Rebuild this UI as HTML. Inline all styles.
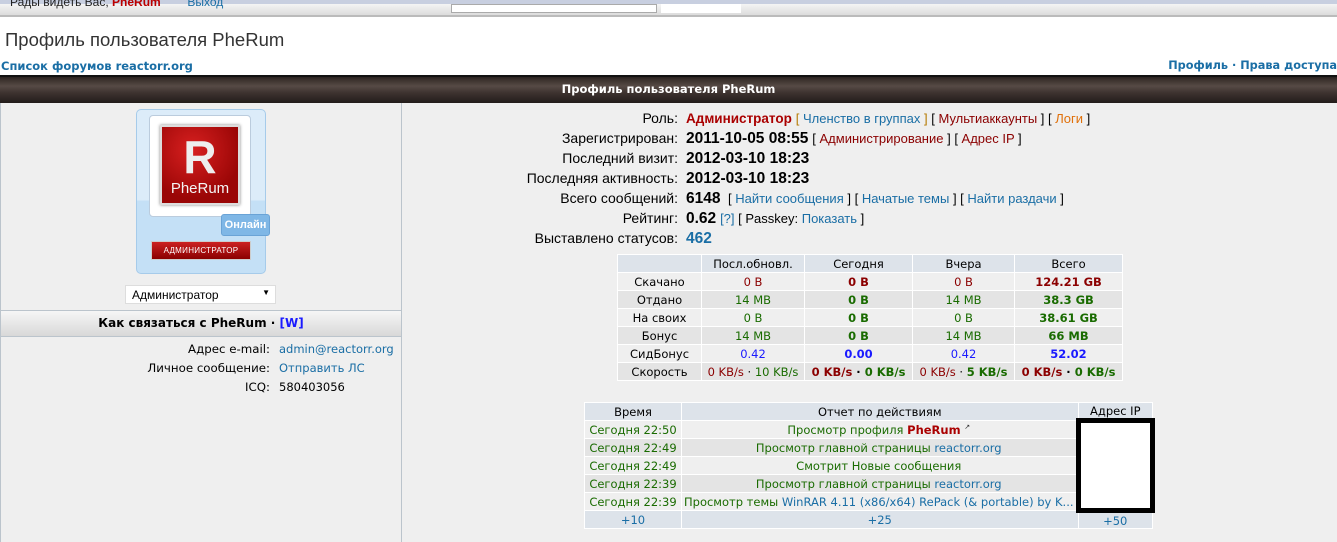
<!DOCTYPE html>
<html><head><meta charset="utf-8"><style>
*{margin:0;padding:0;box-sizing:border-box}
body{width:1337px;height:542px;overflow:hidden;background:#fff;font-family:"Liberation Sans","DejaVu Sans",sans-serif;font-size:13px;color:#000;position:relative}
.a{position:absolute}
.dv{font-family:"DejaVu Sans","Liberation Sans",sans-serif}
a{text-decoration:none}
.blue{color:#1a6ea5}
.br{color:#8b0000}
table{border-collapse:collapse}
td{text-align:center}
.st td{border:1px solid #fff;height:18px;font-size:11.5px;padding:0 2px;white-space:nowrap}
.st tr:nth-child(odd) td{background:#e4e4e4}
.st tr:nth-child(even) td{background:#efefef}
.st tr:first-child td{background:#dde3ea}
.g{color:#196b00}.r{color:#8b0000}.bl{color:#1a1aff}
.b{font-weight:bold}
.info div{height:20px;line-height:20px;white-space:nowrap;font-size:14px}
.info .s{font-size:13px}
.info b{font-size:15.5px}
.info b.n{font-size:13.5px}
</style></head><body>
<!-- top bar -->
<div class="a" style="left:0;top:0;width:1337px;height:17px;background:linear-gradient(#f4f4f4,#dcdcdc);border-bottom:2px solid #bbb;border-top:4px solid #c8cfe0"></div>
<div class="a" style="left:10px;top:-5px;font-size:12px;color:#222">Рады видеть Вас, <b style="color:#b00">PheRum</b> &nbsp;&nbsp;&nbsp;&nbsp;&nbsp;&nbsp;&nbsp;<span class="blue">Выход</span></div>
<div class="a" style="left:451px;top:4px;width:206px;height:9px;background:#fff;border:1px solid #aaa"></div>
<div class="a" style="left:661px;top:4px;width:80px;height:9px;background:#fff"></div>
<!-- title -->
<div class="a" style="left:5px;top:29px;font-size:18.5px;color:#333">Профиль пользователя PheRum</div>
<div class="a dv blue" style="left:1px;top:59px;font-size:11.5px;font-weight:bold">Список форумов reactorr.org</div>
<div class="a dv blue" style="right:0;top:59px;font-size:11.3px;font-weight:bold">Профиль · Права доступа</div>
<!-- header bar -->
<div class="a" style="left:0;top:75px;width:1337px;height:28px;background:linear-gradient(#2a2220 0,#3a302c 10%,#564a45 35%,#3e3330 60%,#221c1a 100%);border-top:2px solid #111"></div>
<div class="a dv" style="left:0;top:82px;width:1337px;text-align:center;color:#fff;font-weight:bold;font-size:11.5px">Профиль пользователя PheRum</div>
<!-- columns -->
<div class="a" style="left:0;top:103px;width:402px;height:439px;background:#efefef;border-left:1px solid #bbc4cc;border-right:1px solid #bbc4cc"></div>
<div class="a" style="left:402px;top:103px;width:935px;height:439px;background:#efefef"></div>
<!-- avatar box -->
<div class="a" style="left:136px;top:109px;width:130px;height:165px;background:linear-gradient(#dcecf9 0,#dcecf9 55%,#c4e0f6 56%,#c4e0f6);border:1px solid #a6cbea;border-radius:5px"></div>
<div class="a" style="left:149px;top:115px;width:102px;height:102px;background:#fff;border:1px solid #bcd;border-radius:4px"></div>
<div class="a" style="left:160px;top:125px;width:80px;height:80px;background:radial-gradient(circle at 40% 30%,#d82020,#9a0606 70%);border:2px solid #ddd;box-shadow:0 0 3px #888"></div>
<div class="a" style="left:160px;top:130px;width:80px;text-align:center;color:#eee;font:bold 46px 'Liberation Sans',sans-serif">R</div>
<div class="a" style="left:160px;top:180px;width:80px;text-align:center;color:#f4f4f4;font-size:15px">PheRum</div>
<div class="a" style="left:221px;top:214px;width:49px;height:22px;background:#7fb7e6;border:1px solid #6aa3d6;border-radius:3px;color:#fff;font-size:11px;font-weight:bold;line-height:20px;text-align:center">Онлайн</div>
<div class="a" style="left:151px;top:241px;width:100px;height:19px;background:linear-gradient(#c22,#8a0000);border:1px solid #ccc;color:#fff;font-size:8px;line-height:17px;text-align:center;letter-spacing:.3px">АДМИНИСТРАТОР</div>
<div class="a" style="left:125px;top:285px;width:151px;height:19px;background:#fff;border:1px solid #ddd;font-size:12px;padding:2px 6px" >Администратор<span style="position:absolute;right:5px;top:2px;font-size:8px">▼</span></div>
<!-- contact -->
<div class="a" style="left:1px;top:310px;width:400px;height:27px;background:linear-gradient(#f6f6f6,#d8d8d8);border-top:1px solid #bbc4cc;border-bottom:1px solid #bbc4cc"></div>
<div class="a dv" style="left:1px;top:316px;width:400px;text-align:center;font-weight:bold;font-size:12px">Как связаться с PheRum · <span style="color:#1a1aff">[W]</span></div>
<div class="a dv" style="left:0;top:340px;width:270px;text-align:right;font-size:11.8px;line-height:19px">Адрес e-mail:<br>Личное сообщение:<br>ICQ:</div>
<div class="a dv" style="left:279px;top:340px;font-size:11.5px;line-height:19px"><span class="blue">admin@reactorr.org</span><br><span class="blue">Отправить ЛС</span><br>580403056</div>
<!-- info -->
<div class="a info" style="left:402px;top:108px;width:276px;text-align:right">
<div>Роль:</div><div>Зарегистрирован:</div><div>Последний визит:</div><div>Последняя активность:</div><div>Всего сообщений:</div><div>Рейтинг:</div><div>Выставлено статусов:</div></div>
<div class="a info" style="left:686px;top:108px">
<div><b class="n" style="color:#a00">Администратор</b> <span class="s"><span style="color:#b57a00">[</span> <span class="blue">Членство в группах</span> <span style="color:#b57a00">]</span> [ <span class="br">Мультиаккаунты</span> ] [ <span style="color:#e0700a">Логи</span> ]</span></div>
<div><b>2011-10-05 08:55</b> <span class="s">[ <span class="br">Администрирование</span> ] [ <span class="br">Адрес IP</span> ]</span></div>
<div><b>2012-03-10 18:23</b></div>
<div><b>2012-03-10 18:23</b></div>
<div><b>6148</b> <span class="s">&nbsp;[ <span class="blue">Найти сообщения</span> ] [ <span class="blue">Начатые темы</span> ] [ <span class="blue">Найти раздачи</span> ]</span></div>
<div><b>0.62</b> <span class="s"><span class="blue">[?]</span> [ Passkey: <span class="blue">Показать</span> ]</span></div>
<div><b class="blue">462</b></div></div>
<!-- stats -->
<table class="a st dv" style="left:617px;top:254px;width:506px;border:1px solid #aaa">
<tr><td style="width:84px"></td><td style="width:103px">Посл.обновл.</td><td style="width:108px">Сегодня</td><td style="width:102px">Вчера</td><td>Всего</td></tr>
<tr><td>Скачано</td><td class="r">0 B</td><td class="r b">0 B</td><td class="r">0 B</td><td class="r b">124.21 GB</td></tr>
<tr><td>Отдано</td><td class="g">14 MB</td><td class="g b">0 B</td><td class="g">14 MB</td><td class="g b">38.3 GB</td></tr>
<tr><td>На своих</td><td class="g">0 B</td><td class="g b">0 B</td><td class="g">0 B</td><td class="g b">38.61 GB</td></tr>
<tr><td>Бонус</td><td class="g">14 MB</td><td class="g b">0 B</td><td class="g">14 MB</td><td class="g b">66 MB</td></tr>
<tr><td>СидБонус</td><td class="bl">0.42</td><td class="bl b">0.00</td><td class="bl">0.42</td><td class="bl b">52.02</td></tr>
<tr><td>Скорость</td><td><span class="r">0 KB/s</span> · <span class="g">10 KB/s</span></td><td class="b"><span class="r">0 KB/s</span> · <span class="g">0 KB/s</span></td><td><span class="r">0 KB/s</span> · <b class="g">5 KB/s</b></td><td class="b"><span class="r">0 KB/s</span> · <span class="g">0 KB/s</span></td></tr>
</table>
<!-- activity -->
<table class="a st dv" style="left:584px;top:402px;width:571px;border:1px solid #aaa">
<tr><td style="width:97px">Время</td><td style="width:395px">Отчет по действиям</td><td>Адрес IP</td></tr>
<tr><td class="g">Сегодня 22:50</td><td class="g">Просмотр профиля <b style="color:#a00">PheRum</b> <sup style="font-size:7px;color:#333">↗</sup></td><td rowspan="5" style="background:#fff;border:5px solid #000;border-left:5px solid #000"></td></tr>
<tr><td class="g">Сегодня 22:49</td><td class="g">Просмотр главной страницы <span class="blue">reactorr.org</span></td></tr>
<tr><td class="g">Сегодня 22:49</td><td class="g">Смотрит Новые сообщения</td></tr>
<tr><td class="g">Сегодня 22:39</td><td class="g">Просмотр главной страницы <span class="blue">reactorr.org</span></td></tr>
<tr><td class="g">Сегодня 22:39</td><td class="g" style="text-align:left">Просмотр темы <span class="blue">WinRAR 4.11 (x86/x64) RePack (&amp; portable) by K...</span></td></tr>
<tr><td class="blue" style="background:#dde3ea">+10</td><td class="blue" style="background:#dde3ea">+25</td><td class="blue" style="background:#dde3ea">+50</td></tr>
</table>
</body></html>
